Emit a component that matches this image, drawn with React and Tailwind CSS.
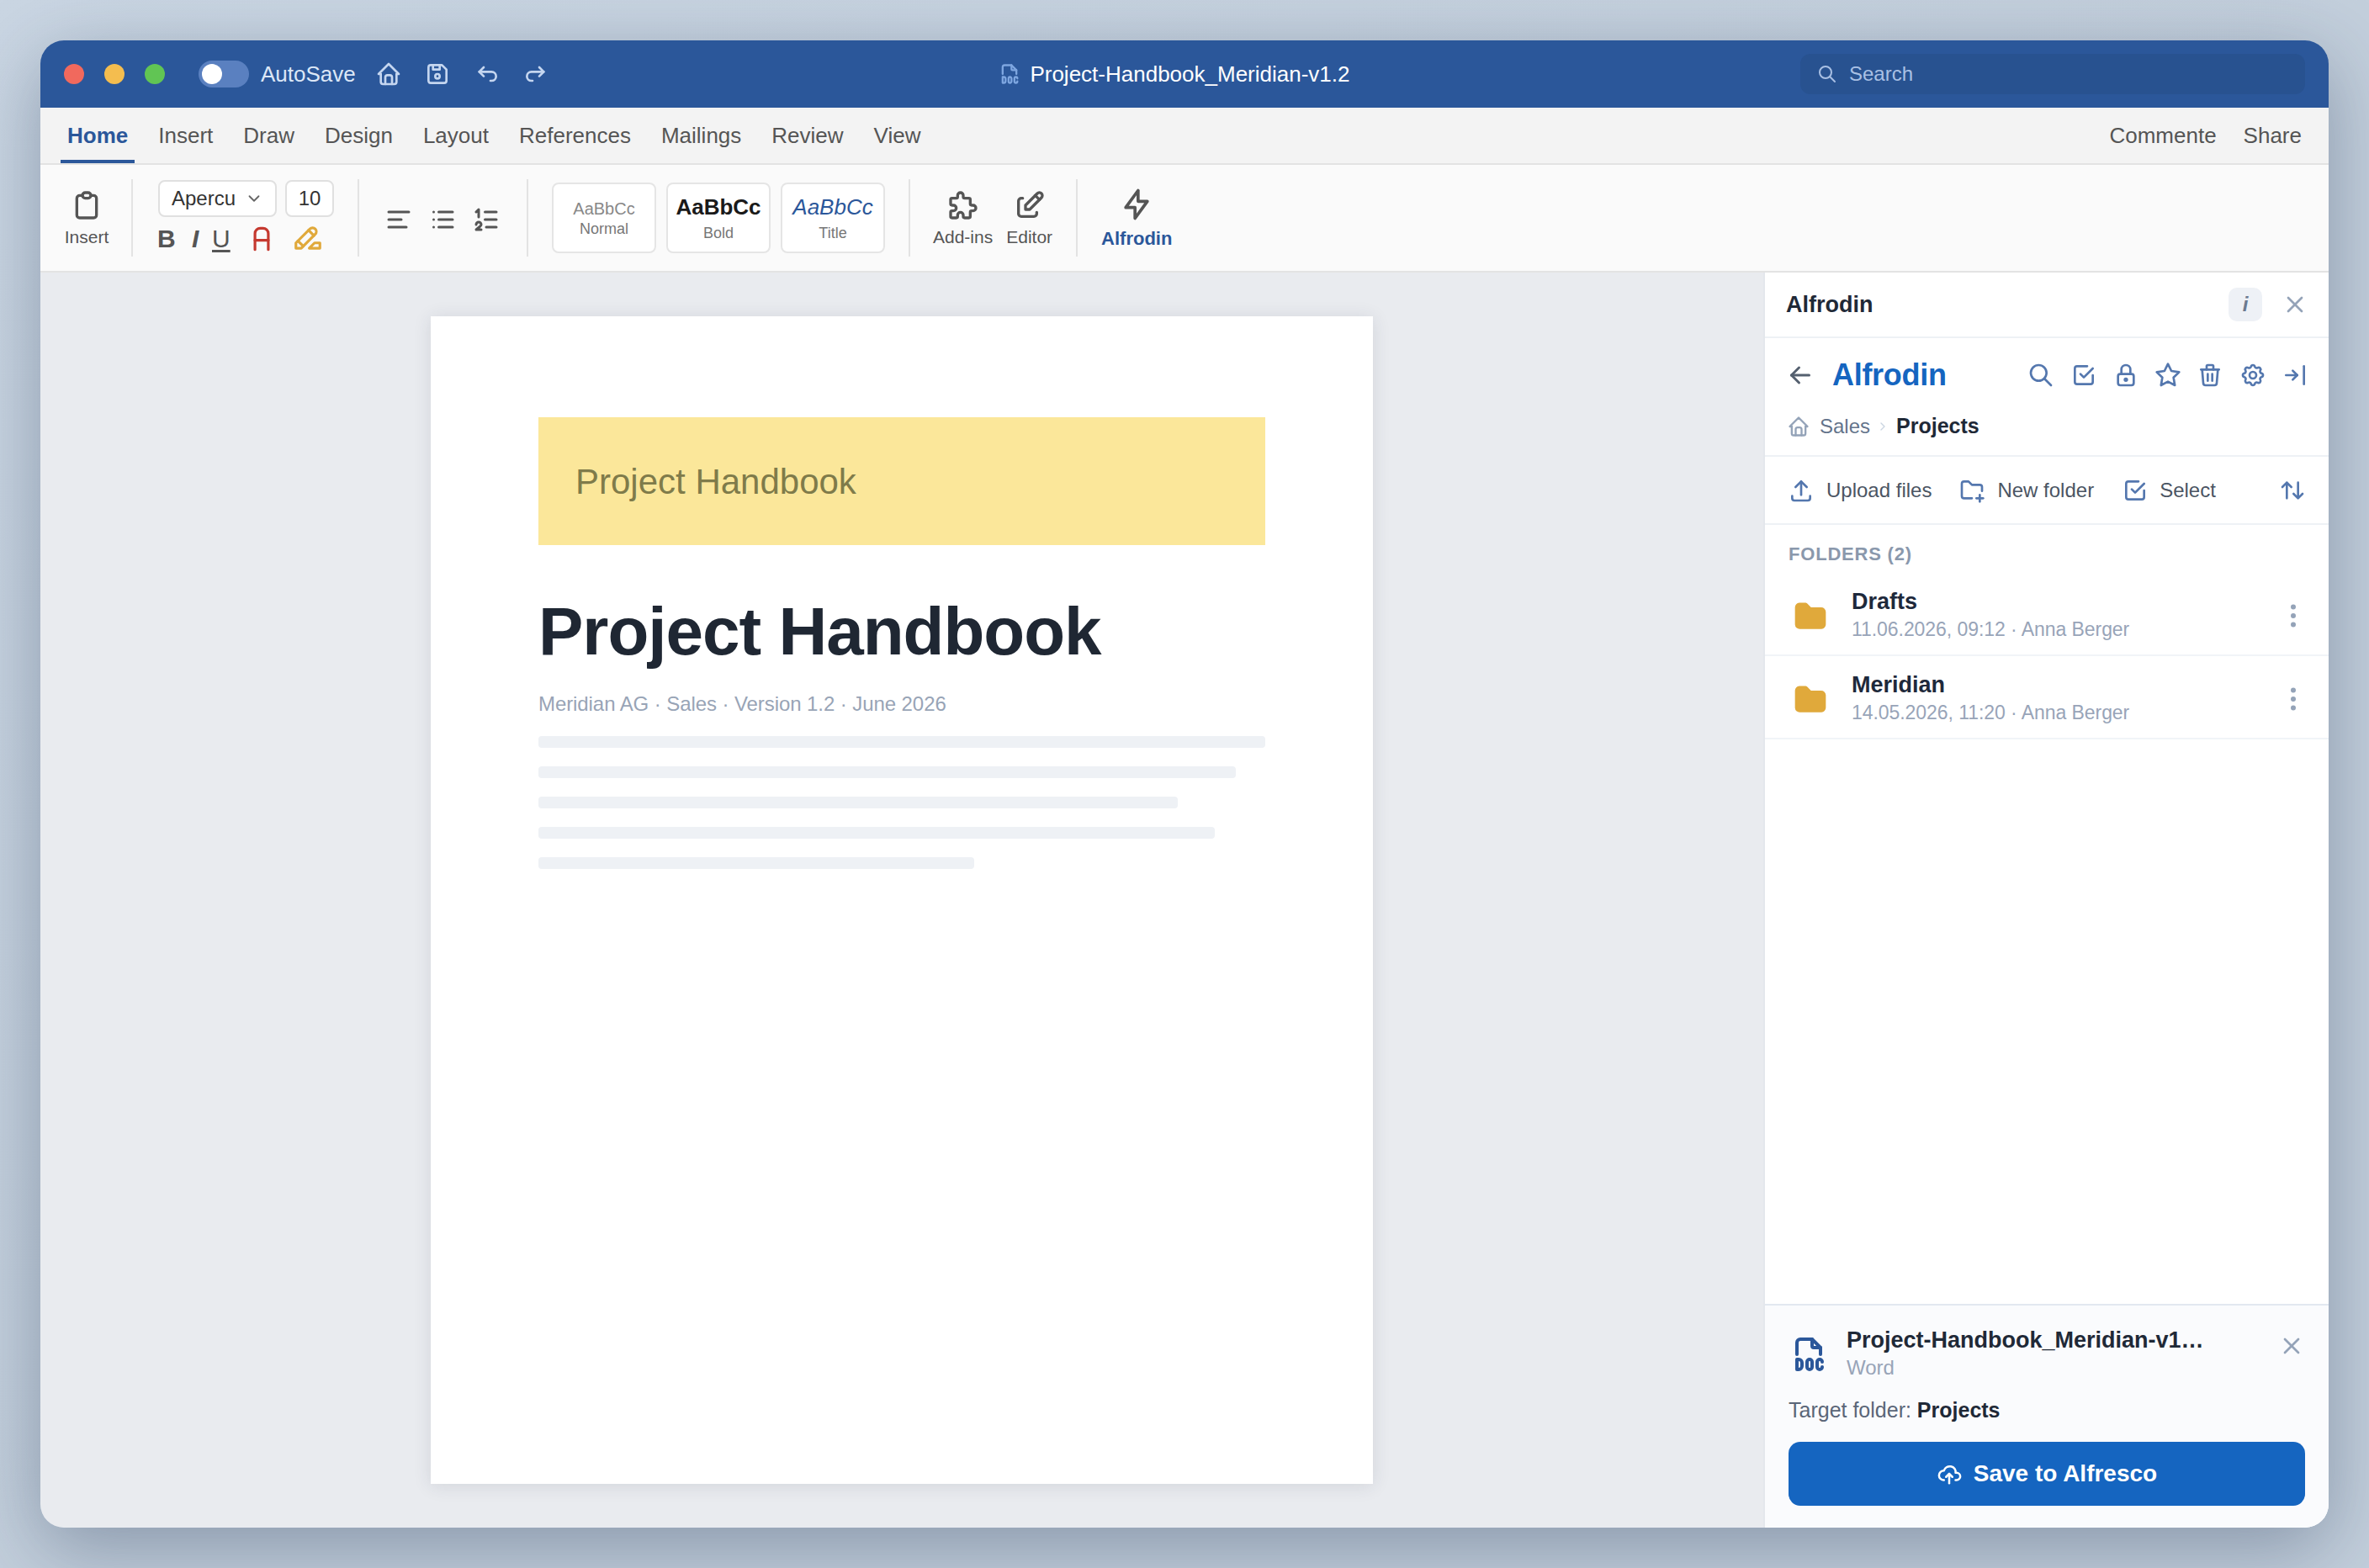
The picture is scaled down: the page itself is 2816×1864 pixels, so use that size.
import React from "react";
import {
  TbHome,
  TbDeviceFloppy,
  TbArrowBackUp,
  TbArrowForwardUp,
  TbFileTypeDoc,
  TbSearch,
  TbClipboard,
  TbChevronDown,
  TbChevronRight,
  TbLetterA,
  TbHighlight,
  TbAlignLeft,
  TbList,
  TbListNumbers,
  TbPuzzle,
  TbEdit,
  TbBolt,
  TbX,
  TbArrowLeft,
  TbCheckbox,
  TbLock,
  TbStar,
  TbTrash,
  TbSettings,
  TbArrowBarToRight,
  TbUpload,
  TbFolderPlus,
  TbArrowsSort,
  TbFolderFilled,
  TbDotsVertical,
  TbCloudUpload,
} from "react-icons/tb";

const tabs = ["Insert", "Draw", "Design", "Layout", "References", "Mailings", "Review", "View"];
const bars = ["w-full", "w-[829px]", "w-[760px]", "w-[804px]", "w-[518px]"];
const panelIcons = [TbSearch, TbCheckbox, TbLock, TbStar, TbTrash, TbSettings, TbArrowBarToRight];
const folders = [
  { name: "Drafts", meta: "11.06.2026, 09:12 · Anna Berger" },
  { name: "Meridian", meta: "14.05.2026, 11:20 · Anna Berger" },
];

const Separator = () => <div className="h-[92px] w-[2px] shrink-0 bg-[#e3e3e3]" />;

const TitleBar = () => (
  <div className="flex h-[80px] shrink-0 items-center bg-[#2b579a] pl-[28px] pr-[28px]">
    {/* TRAFFIC LIGHTS */}
    <div className="flex gap-[24px]">
      <div className="h-[24px] w-[24px] rounded-full bg-[#f1695d]" />
      <div className="h-[24px] w-[24px] rounded-full bg-[#f4bd4f]" />
      <div className="h-[24px] w-[24px] rounded-full bg-[#61c554]" />
    </div>
    <div className="ml-[40px] flex h-[32px] w-[60px] items-center rounded-full bg-[#5a80c0] pl-[4px]">
      <div className="h-[24px] w-[24px] rounded-full bg-white" />
    </div>
    <span className="ml-[14px] text-[26px] text-[#dce7f7]">AutoSave</span>
    <div className="ml-[23px] flex gap-[26.4px] text-[#c5d6f0]">
      <TbHome size={32} />
      <TbDeviceFloppy size={32} />
      <TbArrowBackUp size={32} />
      <TbArrowForwardUp size={32} />
    </div>
    <div className="flex flex-1 items-center justify-center gap-[10px] pr-[2px]">
      <TbFileTypeDoc size={28} className="text-[#7ea6e0]" />
      <span className="text-[26px] text-white">Project-Handbook_Meridian-v1.2</span>
    </div>
    <div className="flex h-[48px] w-[600px] items-center gap-[14px] rounded-[12px] bg-[#285290] pl-[20px] text-[#a9c0e4]">
      <TbSearch size={24} />
      <span className="text-[24px]">Search</span>
    </div>
  </div>
);

const TabBar = () => (
  <div className="flex h-[68px] shrink-0 items-stretch justify-between border-b-2 border-[#e3e3e3] bg-[#f3f3f3] pl-[24px] pr-[32px] text-[26px] text-[#555555]">
    <div className="flex gap-[20px]">
      <div className="flex items-center border-b-4 border-[#2b579a] px-[8px] pt-[4px] font-bold text-[#2b579a]">Home</div>
      {tabs.map((tab) => (
        <div key={tab} className="flex items-center px-[8px]">
          {tab}
        </div>
      ))}
    </div>
    <div className="flex items-center gap-[32px]">
      <span>Commente</span>
      <span>Share</span>
    </div>
  </div>
);

const RibbonButton = ({ icon: Icon, label, className }) => (
  <div className={`flex flex-col items-center text-[21px] leading-[24px] text-[#555555] ${className}`}>
    <Icon size={40} />
    <span className="mt-[6px]">{label}</span>
  </div>
);

const StyleCard = ({ sample, label, sub }) => (
  <div className="flex h-[84px] w-[124px] flex-col items-center justify-center rounded-[8px] border-2 border-[#e5e5e5] bg-white">
    <span className={sample}>AaBbCc</span>
    <span className={`text-[18px] leading-[22px] text-[#777777] ${sub}`}>{label}</span>
  </div>
);

const Ribbon = () => (
  <div className="flex h-[128px] shrink-0 items-center gap-[28px] border-b-2 border-[#e3e3e3] bg-[#fafafa]">
    <RibbonButton icon={TbClipboard} label="Insert" className="ml-[29px] w-[52px]" />
    <div className="-ml-[1px]"><Separator /></div>

    {/* FONT */}
    <div className="ml-[2px] mb-[5px] flex w-[209px] flex-col gap-[11px]">
      <div className="flex gap-[10px]">
        <div className="flex h-[44px] w-[141px] items-center justify-between rounded-[8px] border-2 border-[#e0e0e0] bg-white pl-[14px] pr-[14px] text-[24px] text-[#333333]">
          Apercu
          <TbChevronDown size={22} className="text-[#666666]" />
        </div>
        <div className="flex h-[44px] w-[58px] items-center justify-center rounded-[8px] border-2 border-[#e0e0e0] bg-white text-[24px] text-[#333333]">
          10
        </div>
      </div>
      <div className="-ml-[1px] flex h-[30px] items-center text-[#555555]">
        <span className="w-[41px] text-[30px] font-bold leading-none">B</span>
        <span className="w-[24px] text-[30px] font-bold italic leading-none">I</span>
        <span className="w-[36px] text-[30px] leading-none underline underline-offset-[3px]">U</span>
        <TbLetterA size={38} className="ml-[4px] shrink-0 text-[#c5392f]" />
        <TbHighlight size={38} className="ml-[17px] shrink-0 text-[#e0a93b]" />
      </div>
    </div>
    <Separator />

    {/* LISTS */}
    <div className="ml-[1px] mt-[3px] flex gap-[16px] text-[#555555]">
      <TbAlignLeft size={36} />
      <TbList size={36} />
      <TbListNumbers size={36} />
    </div>
    <div className="ml-[2px]"><Separator /></div>

    {/* STYLES */}
    <div className="flex gap-[12px]">
      <StyleCard sample="text-[20px] leading-[26px] text-[#888888]" label="Normal" sub="" />
      <StyleCard sample="text-[26px] font-bold leading-[30px] text-[#1a1a1a]" label="Bold" sub="mt-[5px]" />
      <StyleCard sample="text-[26px] italic leading-[30px] text-[#2b579a]" label="Title" sub="mt-[5px]" />
    </div>
    <Separator />

    <div className="-ml-[1px] flex gap-[16px]">
      <RibbonButton icon={TbPuzzle} label="Add-ins" />
      <RibbonButton icon={TbEdit} label="Editor" />
    </div>
    <Separator />

    <div className="flex flex-col items-center text-[22px] font-bold leading-[26px] text-[#2b579a]">
      <TbBolt size={44} className="text-[#555555]" />
      <span className="mt-[6px]">Alfrodin</span>
    </div>
  </div>
);

const Document = () => (
  <div className="flex flex-1 justify-center bg-[#e9ebef] py-[52px]">
    <div className="h-full w-[1120px] bg-white px-[128px] pt-[120px] shadow-[0_2px_20px_rgba(40,50,70,0.12)]">
      <div className="flex h-[152px] items-center bg-[#fbe79a] pl-[44px] text-[42px] text-[#7f7b4a]">Project Handbook</div>
      <h1 className="mt-[57px] text-[80px] font-bold leading-[92px] tracking-[-1px] text-[#1f2733]">Project Handbook</h1>
      <p className="mt-[26px] text-[24px] leading-[28px] tracking-[-0.08px] text-[#98a4b6]">Meridian AG · Sales · Version 1.2 · June 2026</p>
      <div className="mt-[24px] flex flex-col gap-[22px]">
        {bars.map((width) => (
          <div key={width} className={`h-[14px] rounded-[4px] bg-[#eef1f5] ${width}`} />
        ))}
      </div>
    </div>
  </div>
);

const FolderRow = ({ folder }) => (
  <div className="flex h-[99px] items-center border-b-2 border-[#f1f4f8] pl-[32px] pr-[24px]">
    <TbFolderFilled size={44} className="mt-[6px] text-[#e0a93b]" />
    <div className="ml-[27px] mt-[3px] flex-1">
      <div className="text-[27px] font-bold leading-[32px] text-[#1e293b]">{folder.name}</div>
      <div className="mt-[1px] text-[23px] leading-[32px] tracking-[-0.06px] text-[#98a4b8]">{folder.meta}</div>
    </div>
    <TbDotsVertical size={36} className="mt-[4px] text-[#94a3b8]" />
  </div>
);

const Panel = () => (
  <div className="flex w-[672px] shrink-0 flex-col border-l-2 border-[#e4e7ec] bg-white">
    {/* PANE HEADER */}
    <div className="flex h-[78px] shrink-0 items-center border-b-2 border-[#eef1f5] pl-[25px] pr-[24px]">
      <span className="flex-1 text-[27px] font-bold text-[#1f2937]">Alfrodin</span>
      <div className="flex h-[40px] w-[40px] items-center justify-center rounded-[10px] bg-[#eef1f6] text-[24px] font-bold italic text-[#6b7a90]">i</div>
      <TbX size={32} className="ml-[23px] text-[#94a3b8]" />
    </div>

    {/* ALFRODIN HEADER */}
    <div className="shrink-0 border-b-2 border-[#eef1f5] pb-[18px]">
      <div className="flex h-[88px] items-center pl-[24px] pr-[24px]">
        <TbArrowLeft size={36} className="text-[#55606f]" />
        <span className="ml-[20px] flex-1 text-[36px] font-bold tracking-[-0.3px] text-[#1565c0]">Alfrodin</span>
        <div className="flex gap-[18.3px] text-[#5477ae]">
          {panelIcons.map((Icon, i) => (
            <Icon key={i} size={32} />
          ))}
        </div>
      </div>
      <div className="mt-[1px] flex h-[32px] items-center pl-[26px] text-[24px] text-[#64748b]">
        <TbHome size={28} className="text-[#94a3b8]" />
        <span className="ml-[11px]">Sales</span>
        <TbChevronRight size={16} className="ml-[7px] text-[#cbd5e1]" />
        <span className="ml-[8px] text-[25px] font-bold text-[#1f2937]">Projects</span>
      </div>
    </div>

    {/* ACTIONS */}
    <div className="flex h-[81px] shrink-0 items-center border-b-2 border-[#eef1f5] pl-[27px] pr-[27px] text-[24px] text-[#4b5563]">
      <div className="flex flex-1 items-center">
        <TbUpload size={32} className="text-[#5477ae]" />
        <span className="ml-[14px]">Upload files</span>
        <TbFolderPlus size={32} className="ml-[32px] text-[#5477ae]" />
        <span className="ml-[14px]">New folder</span>
        <TbCheckbox size={32} className="ml-[33px] text-[#5477ae]" />
        <span className="ml-[13px]">Select</span>
      </div>
      <TbArrowsSort size={32} className="text-[#5477ae]" />
    </div>

    {/* FOLDERS */}
    <div className="flex-1">
      <div className="flex h-[57px] items-end pb-[5px] pl-[28px] text-[22px] font-bold leading-[34px] tracking-[0.8px] text-[#8a98ac]">FOLDERS (2)</div>
      {folders.map((folder) => (
        <FolderRow key={folder.name} folder={folder} />
      ))}
    </div>

    {/* SAVE FOOTER */}
    <div className="shrink-0 border-t-2 border-[#e2e8f0] bg-[#fafbfd] px-[28px] pb-[26px] pt-[24px]">
      <div className="flex items-start">
        <TbFileTypeDoc size={48} className="mt-[10px] shrink-0 text-[#2b579a]" />
        <div className="ml-[21px] flex-1">
          <div className="text-[27px] font-bold leading-[34px] text-[#1f2937]">Project-Handbook_Meridian-v1…</div>
          <div className="text-[24px] leading-[32px] text-[#98a4b8]">Word</div>
        </div>
        <TbX size={32} className="mt-[8px] text-[#94a3b8]" />
      </div>
      <div className="mt-[18px] text-[25px] leading-[32px] text-[#5a6678]">
        Target folder: <span className="font-bold text-[#1f2937]">Projects</span>
      </div>
      <div className="mt-[22px] flex h-[76px] items-center justify-center gap-[14px] rounded-[14px] bg-[#1565c0] text-[28px] font-bold text-white">
        <TbCloudUpload size={30} />
        Save to Alfresco
      </div>
    </div>
  </div>
);

const App = () => (
  <div className="h-[1864px] w-[2816px] bg-gradient-to-br from-[#cad6e3] via-[#c3cfdc] to-[#c3cfdc] p-[48px] font-['Liberation_Sans',sans-serif]">
    <div className="flex h-full flex-col overflow-hidden rounded-[28px] shadow-[0_24px_90px_rgba(30,50,80,0.36)]">
      <TitleBar />
      <TabBar />
      <Ribbon />
      <div className="flex min-h-0 flex-1">
        <Document />
        <Panel />
      </div>
    </div>
  </div>
);

export default App;
